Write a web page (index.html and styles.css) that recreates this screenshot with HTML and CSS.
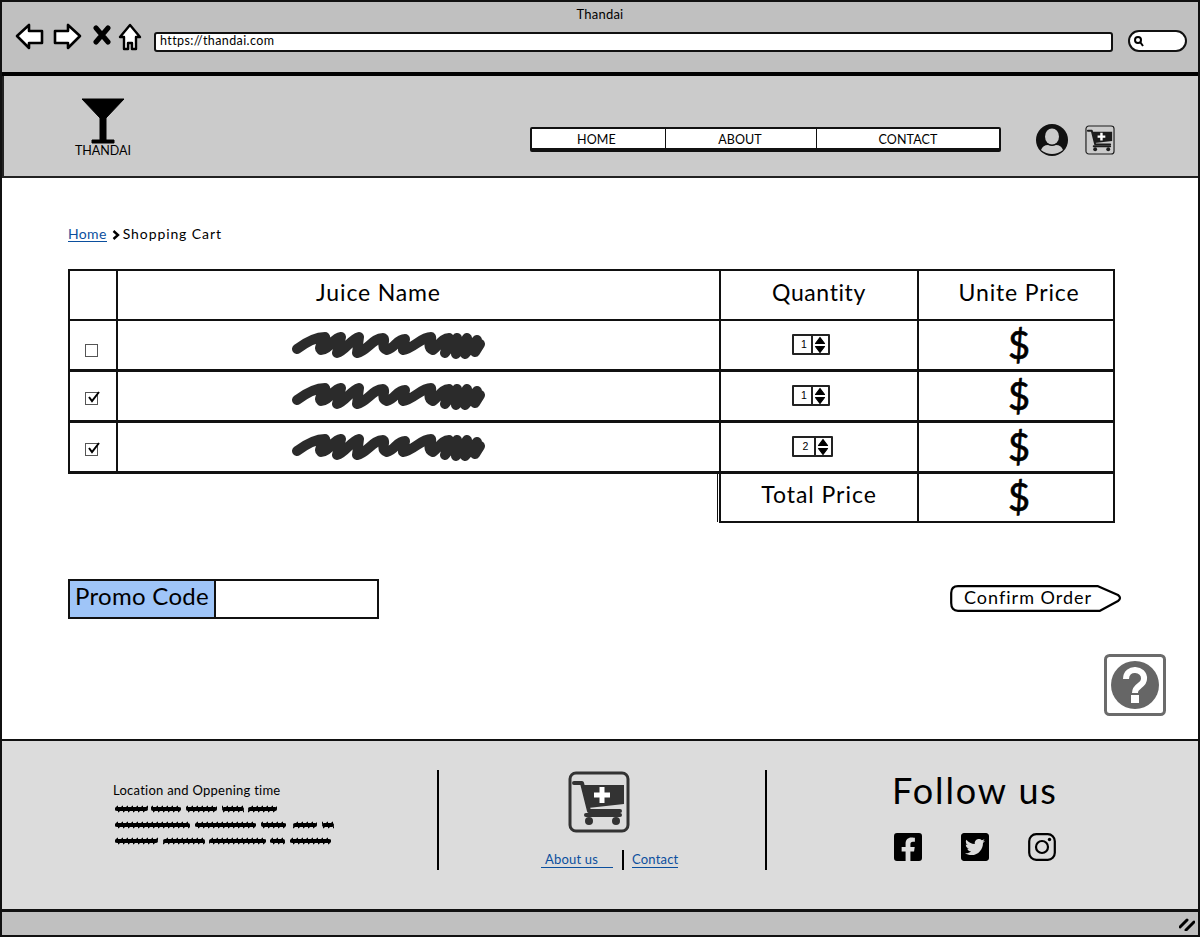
FILE: index.html
```html
<!DOCTYPE html>
<html lang="en">
<head>
<meta charset="utf-8">
<title>Thandai</title>
<link rel="stylesheet" href="styles.css">
</head>
<body>
<svg class="defs" width="0" height="0" aria-hidden="true">
  <symbol id="cart" viewBox="0 0 62 62">
    <rect class="cart-box" x="2" y="2" width="58" height="58" rx="6" fill="none" stroke="currentColor"/>
    <path d="M6 12H14L21 40H52" fill="none" stroke="currentColor" stroke-width="4" stroke-linecap="round" stroke-linejoin="round"/>
    <path d="M14 14H56V33L20 37Z" fill="currentColor"/>
    <path d="M18 44H52" stroke="currentColor" stroke-width="4" stroke-linecap="round"/>
    <circle cx="21" cy="50" r="4" fill="currentColor"/>
    <circle cx="48" cy="50" r="4" fill="currentColor"/>
    <path d="M34 16V32M26 24H42" stroke="#fff" stroke-width="5"/>
  </symbol>
  <symbol id="scrib" viewBox="0 0 194 28">
    <path d="M6 18C14 12 24 6 34 6C36 8 26 16 30 19C38 19 42 7 50 6L46 22C54 20 60 8 68 6L66 22C76 20 82 7 92 7C96 9 88 16 96 19C104 17 106 8 114 8L112 19C122 18 130 6 140 6C142 9 134 15 142 19C148 14 152 7 158 7L154 22L166 7L165 23L176 7L174 23L186 9L184 21L189 13" fill="none" stroke="#2b2b2b" stroke-width="10" stroke-linecap="round" stroke-linejoin="round"/>
  </symbol>
  <symbol id="spin-arrows" viewBox="0 0 12 18">
    <path d="M1.5 7.5L6 1.5L10.5 7.5ZM1.5 10.5L6 16.5L10.5 10.5Z" fill="#000" stroke="#000" stroke-width="1.2" stroke-linejoin="round"/>
  </symbol>
  <pattern id="zig" width="5" height="16" patternUnits="userSpaceOnUse">
    <path d="M0 7L5 1" fill="none" stroke="#000" stroke-width="1.7"/>
  </pattern>
</svg>

<div class="window">
  <div class="chrome">
    <div class="chrome-title">Thandai</div>
    <div class="toolbar">
      <svg class="tool tool-back" width="29" height="27" viewBox="0 0 29 27"><path d="M2 13L14 2V8H27V20H14V25Z" fill="#fff" stroke="#000" stroke-width="2.6" stroke-linejoin="round"/></svg>
      <svg class="tool tool-forward" width="29" height="27" viewBox="0 0 29 27"><path d="M27 13L15 2V8H2V20H15V25Z" fill="#fff" stroke="#000" stroke-width="2.6" stroke-linejoin="round"/></svg>
      <svg class="tool tool-stop" width="18" height="20" viewBox="0 0 18 20"><path d="M3 3L15 17M15 3L3 17" stroke="#000" stroke-width="5" stroke-linecap="round"/></svg>
      <svg class="tool tool-home" width="24" height="28" viewBox="0 0 24 28"><path d="M12 2L22 14H18V26H14V20H10V26H6V14H2Z" fill="#fff" stroke="#000" stroke-width="2.4" stroke-linejoin="round"/></svg>
      <div class="url">https://thandai.com</div>
      <div class="search">
        <svg width="12" height="12" viewBox="0 0 12 12"><circle cx="5" cy="5" r="3" fill="none" stroke="#000" stroke-width="2"/><path d="M7.5 7.5L10 11" stroke="#000" stroke-width="2"/></svg>
      </div>
    </div>
  </div>

  <header class="site-header">
    <div class="logo">
      <svg width="44" height="46" viewBox="0 0 44 46"><path d="M1 1H43L25 20V42H33V45H11V42H19V20Z" fill="#000" stroke="#000" stroke-linejoin="round"/></svg>
      <span class="logo-text">THANDAI</span>
    </div>
    <nav class="nav">
      <a class="nav-item nav-home">HOME</a>
      <a class="nav-item nav-about">ABOUT</a>
      <a class="nav-item nav-contact">CONTACT</a>
    </nav>
    <svg class="user-icon" width="32" height="32" viewBox="0 0 32 32">
      <circle cx="16" cy="16" r="16" fill="#111"/>
      <ellipse cx="16" cy="12.5" rx="7" ry="8" fill="#cbcbcb"/>
      <path d="M5 26Q7 21 12 21Q16 23 20 21Q25 21 27 26Q22 30 16 30Q10 30 5 26Z" fill="#cbcbcb"/>
    </svg>
    <svg class="header-cart" width="30" height="30"><use href="#cart"/></svg>
  </header>

  <main class="content">
    <div class="crumbs"><a class="link">Home</a><svg class="crumb-sep" width="8" height="10" viewBox="0 0 8 10"><path d="M1.5 1L6 5L1.5 9" fill="none" stroke="#000" stroke-width="2.4"/></svg><span class="crumb-current">Shopping Cart</span></div>

    <table class="cart-table">
      <thead>
        <tr><th class="col-check"></th><th class="col-name">Juice Name</th><th class="col-qty">Quantity</th><th class="col-price">Unite Price</th></tr>
      </thead>
      <tbody>
        <tr class="row-first">
          <td class="col-check"><span class="check check-low"></span></td>
          <td class="col-name"><svg class="scrib" width="194" height="28"><use href="#scrib"/></svg></td>
          <td class="col-qty"><span class="spin"><span class="spin-val">1</span><span class="spin-btn"><svg width="12" height="18"><use href="#spin-arrows"/></svg></span></span></td>
          <td class="col-price dollar">$</td>
        </tr>
        <tr class="row-thick">
          <td class="col-check"><span class="check"><svg width="14" height="14" viewBox="0 0 14 14"><path d="M3 6L6 10L13 1" fill="none" stroke="#000" stroke-width="2"/></svg></span></td>
          <td class="col-name"><svg class="scrib" width="194" height="28"><use href="#scrib"/></svg></td>
          <td class="col-qty"><span class="spin"><span class="spin-val">1</span><span class="spin-btn"><svg width="12" height="18"><use href="#spin-arrows"/></svg></span></span></td>
          <td class="col-price dollar">$</td>
        </tr>
        <tr class="row-thick">
          <td class="col-check"><span class="check"><svg width="14" height="14" viewBox="0 0 14 14"><path d="M3 6L6 10L13 1" fill="none" stroke="#000" stroke-width="2"/></svg></span></td>
          <td class="col-name"><svg class="scrib" width="194" height="28"><use href="#scrib"/></svg></td>
          <td class="col-qty"><span class="spin spin-wide"><span class="spin-val">2</span><span class="spin-btn"><svg width="12" height="18"><use href="#spin-arrows"/></svg></span></span></td>
          <td class="col-price dollar">$</td>
        </tr>
        <tr class="row-total">
          <td class="blank" colspan="2"></td>
          <td class="col-qty total-label">Total Price</td>
          <td class="col-price dollar">$</td>
        </tr>
      </tbody>
    </table>

    <div class="order-row">
      <div class="promo"><span class="promo-label">Promo Code</span><span class="promo-input"></span></div>
      <a class="confirm">
        <svg class="confirm-shape" width="172" height="27" viewBox="0 0 172 27"><path d="M8 1.2H148L168 10Q172 13 168 16L150 25.8H8Q1.2 25.8 1.2 18V8Q1.2 1.2 8 1.2Z" fill="#fff" stroke="#000" stroke-width="2.2" stroke-linejoin="round"/></svg>
        <span class="confirm-text">Confirm Order</span>
      </a>
    </div>

    <div class="help-row">
      <svg class="help" width="62" height="62" viewBox="0 0 62 62">
        <rect x="1.5" y="1.5" width="59" height="59" rx="4" fill="#fff" stroke="#6b6b6b" stroke-width="3"/>
        <circle cx="31" cy="31" r="24" fill="#666"/>
        <path d="M22 25C22 12 41 14 40 25C40 32 31 31 31 39" fill="none" stroke="#fff" stroke-width="6"/>
        <rect x="27" y="41" width="8" height="8" fill="#fff"/>
      </svg>
    </div>
  </main>

  <footer class="site-footer">
    <section class="foot-col foot-info">
      <div class="foot-title">Location and Oppening time</div>
      <svg class="foot-scrib" width="225" height="42" viewBox="0 0 225 42" aria-hidden="true">
        <g fill="#000"><rect x="2" y="2" width="33" height="4" rx="2"/><rect x="38" y="2" width="30" height="4" rx="2"/><rect x="73" y="2" width="31" height="4" rx="2"/><rect x="109" y="2" width="22" height="4" rx="2"/><rect x="135" y="2" width="29" height="4" rx="2"/>
        <rect x="2" y="18" width="75" height="4" rx="2"/><rect x="82" y="18" width="61" height="4" rx="2"/><rect x="148" y="18" width="25" height="4" rx="2"/><rect x="180" y="18" width="24" height="4" rx="2"/><rect x="209" y="18" width="12" height="4" rx="2"/>
        <rect x="2" y="34" width="43" height="4" rx="2"/><rect x="50" y="34" width="42" height="4" rx="2"/><rect x="96" y="34" width="57" height="4" rx="2"/><rect x="157" y="34" width="15" height="4" rx="2"/><rect x="177" y="34" width="41" height="4" rx="2"/></g>
        <g fill="url(#zig)"><rect x="2" y="0" width="33" height="8"/><rect x="38" y="0" width="30" height="8"/><rect x="73" y="0" width="31" height="8"/><rect x="109" y="0" width="22" height="8"/><rect x="135" y="0" width="29" height="8"/>
        <rect x="2" y="16" width="75" height="8"/><rect x="82" y="16" width="61" height="8"/><rect x="148" y="16" width="25" height="8"/><rect x="180" y="16" width="24" height="8"/><rect x="209" y="16" width="12" height="8"/>
        <rect x="2" y="32" width="43" height="8"/><rect x="50" y="32" width="42" height="8"/><rect x="96" y="32" width="57" height="8"/><rect x="157" y="32" width="15" height="8"/><rect x="177" y="32" width="41" height="8"/></g>
      </svg>
    </section>
    <section class="foot-col foot-mid">
      <svg class="foot-cart" width="62" height="62"><use href="#cart"/></svg>
      <div class="foot-links"><a class="link link-about">About us</a><span class="foot-sep"></span><a class="link">Contact</a></div>
    </section>
    <section class="foot-col foot-social">
      <div class="follow">Follow us</div>
      <div class="social-icons">
        <svg width="28" height="28" viewBox="0 32 448 448"><path d="M400 32H48A48 48 0 0 0 0 80v352a48 48 0 0 0 48 48h137.25V327.69h-63V256h63v-54.64c0-62.15 37-96.48 93.67-96.48 27.14 0 55.52 4.84 55.52 4.84v61h-31.27c-30.81 0-40.42 19.12-40.42 38.73V256h68.78l-11 71.69h-57.78V480H400a48 48 0 0 0 48-48V80a48 48 0 0 0-48-48z"/></svg>
        <svg width="28" height="28" viewBox="0 32 448 448"><path d="M400 32H48C21.5 32 0 53.5 0 80v352c0 26.5 21.5 48 48 48h352c26.5 0 48-21.5 48-48V80c0-26.5-21.5-48-48-48zm-48.9 158.8c.2 2.8.2 5.7.2 8.5 0 86.7-66 186.6-186.6 186.6-37.2 0-71.7-10.8-100.7-29.4 5.3.6 10.4.8 15.8.8 30.7 0 58.9-10.4 81.4-28-28.8-.6-53-19.5-61.3-45.5 10.1 1.5 19.2 1.5 29.6-1.2-30-6.1-52.5-32.5-52.5-64.4v-.8c8.7 4.9 18.9 7.9 29.6 8.3a65.447 65.447 0 0 1-29.2-54.6c0-12.2 3.2-23.4 8.9-33.1 32.3 39.8 80.8 65.8 135.2 68.6-9.3-44.5 24-80.6 64-80.6 18.9 0 35.9 7.9 47.9 20.7 14.8-2.8 29-8.3 41.6-15.8-4.9 15.2-15.1 27.9-29.6 36.2 13.4-1.4 26.4-5.1 38.4-10.3-9.1 13.4-20.5 25.2-33.7 34.7z"/></svg>
        <svg width="28" height="28" viewBox="0 0 28 28"><rect x="1.2" y="1.2" width="25.6" height="25.6" rx="7" fill="none" stroke="#000" stroke-width="2.2"/><circle cx="14" cy="14" r="6" fill="none" stroke="#000" stroke-width="2.2"/><circle cx="21.5" cy="6.5" r="1.7"/></svg>
      </div>
    </section>
  </footer>

  <div class="statusbar">
    <svg width="16" height="14" viewBox="0 0 16 14"><path d="M1 10L8 3M7 13L15 5" stroke="#000" stroke-width="3" stroke-linecap="round"/></svg>
  </div>
</div>
</body>
</html>
```

FILE: styles.css
```css
* { box-sizing: border-box; }
html, body { margin: 0; padding: 0; background: #fff; }
body { height: 938px; font-family: "Lato", "Liberation Sans", sans-serif; color: #000; overflow: hidden; }
.defs { position: absolute; }
svg { display: block; }
a { color: inherit; }
.cart-box { stroke-width: var(--cart-box, 3); }

.window {
  width: 1200px;
  height: 937px;
  border: 2px solid #111;
  display: flex;
  flex-direction: column;
}

/* browser chrome */
.chrome {
  height: 74px;
  flex: none;
  background: #c0c0c0;
  border-bottom: 4px solid #000;
}
.chrome-title { height: 23px; padding-top: 3px; text-align: center; font-size: 13px; line-height: 18px; letter-spacing: .2px; }
.toolbar { display: flex; align-items: center; height: 32px; padding-left: 13px; }
.tool-back { margin-top: -9px; }
.tool-forward { margin-left: 9px; margin-top: -9px; }
.tool-stop { margin-left: 11px; margin-top: -12px; }
.tool-home { margin-left: 7px; margin-top: -9px; }
.url {
  width: 959px;
  height: 20px;
  margin-left: 12px;
  margin-top: 1px;
  background: #fff;
  border: 2.5px solid #111;
  border-radius: 3px;
  padding-left: 4px;
  font-size: 12.5px;
  line-height: 14px;
  letter-spacing: .4px;
}
.search {
  width: 59px;
  height: 22px;
  margin-left: 15px;
  margin-top: -1px;
  background: #fff;
  border: 2.5px solid #111;
  border-radius: 11px;
  padding: 3px 0 0 3px;
}

/* site header */
.site-header {
  height: 102px;
  flex: none;
  background: #cbcbcb;
  border-left: 2px solid #222;
  border-bottom: 2px solid #222;
  display: flex;
  align-items: flex-start;
  padding: 22px 0 0 71px;
}
.logo { width: 56px; display: flex; flex-direction: column; align-items: center; }
.logo-text { font-size: 12.5px; line-height: 14px; margin-top: 0; }
.nav {
  display: flex;
  margin-left: 399px;
  margin-top: 29px;
  height: 25px;
  width: 471px;
  background: #fff;
  border: 2px solid #111;
  border-bottom-width: 4px;
  border-radius: 2px;
}
.nav-item { font-size: 12.5px; line-height: 21px; text-align: center; letter-spacing: .1px; }
.nav-home { width: 134px; padding-right: 4px; border-right: 1.5px solid #111; }
.nav-about { width: 151px; padding-right: 2px; border-right: 1.5px solid #111; }
.nav-contact { flex: 1; }
.user-icon { margin-left: 35px; margin-top: 26px; }
.header-cart { margin-left: 17px; margin-top: 27px; color: #1c1c1c; --cart-box: 2.4; }

/* main */
.content { height: 561px; flex: none; background: #fff; padding: 0 83px 0 66px; }
.crumbs { display: flex; align-items: center; height: 20px; margin-top: 46px; font-size: 14px; letter-spacing: .35px; }
.crumb-current { letter-spacing: .9px; margin-top: -1px; }
.link { color: #0b4f9e; border-bottom: 1px solid #0b4f9e; line-height: 15px; }
.crumb-sep { margin: 1px 3px 0 5px; }

.cart-table {
  width: 1047px;
  margin-top: 25px;
  border-collapse: collapse;
  table-layout: fixed;
}
.cart-table th, .cart-table td { border: 2px solid #111; padding: 0; text-align: center; height: 50px; }
.cart-table th { font-weight: 400; font-size: 23px; padding-bottom: 7px; letter-spacing: .85px; }
.cart-table th.col-name { padding-right: 80px; }
.cart-table th.col-qty { letter-spacing: .6px; }
.cart-table th.col-price { padding-left: 6px; }
.col-check { width: 48px; }
.col-qty { width: 198px; }
.col-price { width: 196px; }
.row-first td { border-bottom-width: 3px; height: 50px; }
.row-thick td { border-bottom-width: 3px; height: 51px; }
.cart-table td.col-name { text-align: left; }
.scrib { margin: 0 0 0 173px; }
.check {
  display: block;
  width: 13px;
  height: 13px;
  margin: 6px 0 0 15px;
  border: 1.5px solid #555;
  background: #fff;
}
.check-low { margin-top: 12px; }
.check svg { margin-top: -2px; }
.spin {
  display: flex;
  width: 38px;
  height: 21px;
  margin: 0 0 0 71px;
  border: 2px solid #222;
  border-radius: 1px;
  background: #fff;
  font-size: 10.5px;
  font-family: "Liberation Sans", sans-serif;
}
.spin-wide { width: 41px; }
.spin-val { flex: 1; line-height: 17px; text-align: center; padding-left: 3px; }
.spin-btn { width: 17px; border-left: 2px solid #222; padding: 0 0 0 1px; }
.dollar { font-size: 38px; line-height: 1; padding: 0 0 2px 6px !important; -webkit-text-stroke: .7px #000; }
.cart-table td.blank { border: 0; border-top: 2px solid #111; }
.total-label { font-size: 23px; letter-spacing: .95px; padding-bottom: 6px !important; box-shadow: -2px 0 0 #fff, -3px 0 0 #111; }

.order-row { display: flex; justify-content: space-between; align-items: center; margin-top: 56px; margin-right: -7px; }
.promo { display: flex; width: 311px; height: 40px; border: 2px solid #111; }
.promo-label { width: 146px; background: #9fc5f8; border-right: 2px solid #111; font-size: 24px; line-height: 30px; padding-left: 5px; letter-spacing: .3px; white-space: nowrap; }
.promo-input { flex: 1; background: #fff; }
.confirm { display: block; position: relative; width: 172px; height: 27px; margin-top: -1px; }
.confirm-text { position: absolute; left: 14px; top: 0; font-size: 18px; line-height: 25px; letter-spacing: 1px; }

.help-row { display: flex; justify-content: flex-end; margin-top: 35px; margin-right: -51px; }

/* footer */
.site-footer {
  height: 173px;
  flex: none;
  background: #dcdcdc;
  border-top: 2px solid #111;
  border-bottom: 3px solid #111;
  display: flex;
  align-items: flex-start;
  padding-top: 29px;
}
.foot-col { height: 100px; }
.foot-info { width: 437px; padding-left: 111px; border-right: 2px solid #000; }
.foot-title { font-size: 13px; line-height: 16px; margin-top: 12px; letter-spacing: .25px; }
.foot-scrib { margin-top: 7px; }
.foot-mid { width: 328px; border-right: 2px solid #000; display: flex; flex-direction: column; align-items: flex-start; padding-left: 129px; }
.foot-cart { color: #333; margin-top: 1px; }
.foot-links { display: flex; align-items: center; height: 20px; margin-top: 17px; margin-left: -27px; font-size: 13px; letter-spacing: .2px; white-space: nowrap; }
.link-about { width: 72px; padding-left: 4px; }
.foot-sep { width: 2px; height: 20px; background: #000; margin: 0 8px 0 9px; }
.foot-social { padding-left: 125px; }
.follow { font-size: 36px; line-height: 40px; letter-spacing: 1.9px; white-space: nowrap; }
.social-icons { display: flex; gap: 39px; margin-top: 23px; margin-left: 2px; }

.statusbar { flex: 1; background: #c0c0c0; display: flex; justify-content: flex-end; align-items: center; padding-right: 3px; }
```
